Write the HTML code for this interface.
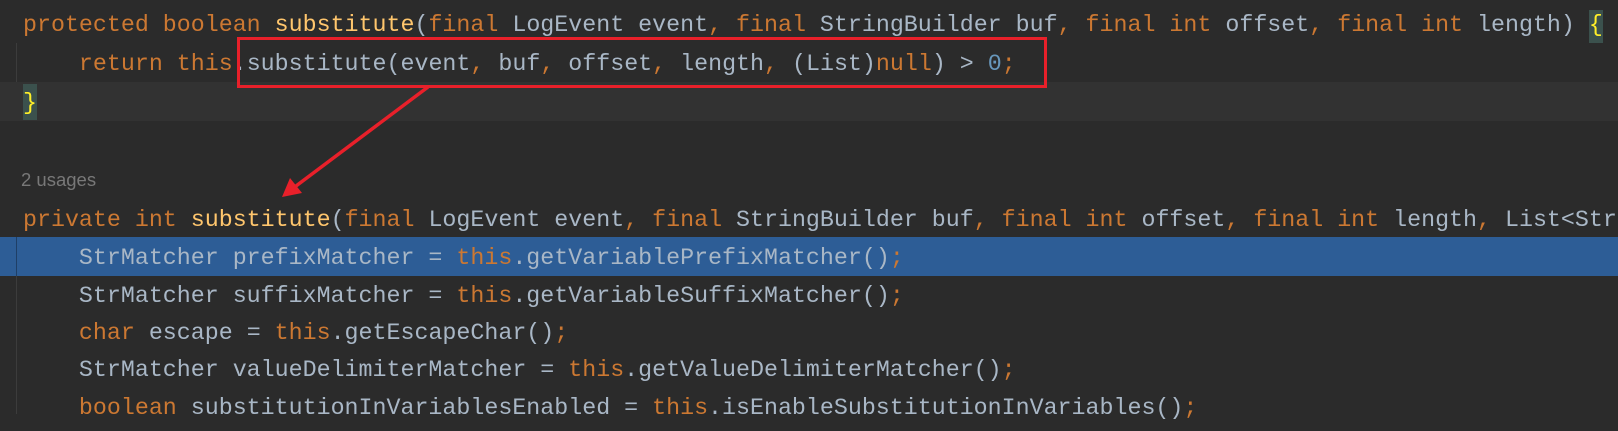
<!DOCTYPE html>
<html><head><meta charset="utf-8"><style>
html,body{margin:0;padding:0;}
body{width:1618px;height:414px;background:#2b2b2b;position:relative;overflow:hidden;}
.l{position:absolute;left:23px;width:1595px;overflow:hidden;margin:0;font-family:"Liberation Mono",monospace;font-size:23.3px;line-height:30px;height:38px;white-space:pre;color:#a9b7c6;}
.k{color:#cc7832}.m{color:#ffc66d}.n{color:#6897bb}
.br{color:#ffef28;background:#3b514d;display:inline-block;height:38px;line-height:30px;padding-top:4px;box-sizing:border-box;}
.band{position:absolute;left:0;width:1618px;}
.guide{position:absolute;left:16px;width:1px;background:#3c3c3c;}
</style></head><body>
<div class="band" style="top:82px;height:39px;background:#323232"></div>
<div class="band" style="top:237px;height:39px;background:#2d5d96"></div>
<div class="guide" style="top:43px;height:39px"></div>
<div class="guide" style="top:237px;height:177px;background:#1f3f66"></div>
<div class="guide" style="top:276px;height:138px"></div>

<pre class="l" style="top:10px;height:34px"><span class="k">protected boolean </span><span class="m">substitute</span>(<span class="k">final </span>LogEvent event<span class="k">, final </span>StringBuilder buf<span class="k">, final int </span>offset<span class="k">, final int </span>length) <span class="br" style="margin-top:-6px;vertical-align:top;padding-top:6px;height:39px">{</span></pre>
<pre class="l" style="top:49px">    <span class="k">return this</span>.substitute(event<span class="k">, </span>buf<span class="k">, </span>offset<span class="k">, </span>length<span class="k">, </span>(List)<span class="k">null</span>) &gt; <span class="n">0</span><span class="k">;</span></pre>
<pre class="l" style="top:84px"><span class="br" style="vertical-align:top;margin-top:-2px;padding-top:6px">}</span></pre>
<div style="position:absolute;left:21px;top:169px;font-family:'Liberation Sans',sans-serif;font-size:18.5px;color:#787878;">2 usages</div>
<pre class="l" style="top:205px"><span class="k">private int </span><span class="m">substitute</span>(<span class="k">final </span>LogEvent event<span class="k">, final </span>StringBuilder buf<span class="k">, final int </span>offset<span class="k">, final int </span>length<span class="k">, </span>List&lt;String&gt; priorVariables) {</pre>
<pre class="l" style="top:243px">    StrMatcher prefixMatcher = <span class="k">this</span>.getVariablePrefixMatcher()<span class="k">;</span></pre>
<pre class="l" style="top:281px">    StrMatcher suffixMatcher = <span class="k">this</span>.getVariableSuffixMatcher()<span class="k">;</span></pre>
<pre class="l" style="top:318px">    <span class="k">char </span>escape = <span class="k">this</span>.getEscapeChar()<span class="k">;</span></pre>
<pre class="l" style="top:355px">    StrMatcher valueDelimiterMatcher = <span class="k">this</span>.getValueDelimiterMatcher()<span class="k">;</span></pre>
<pre class="l" style="top:393px">    <span class="k">boolean </span>substitutionInVariablesEnabled = <span class="k">this</span>.isEnableSubstitutionInVariables()<span class="k">;</span></pre>

<svg width="1618" height="414" style="position:absolute;left:0;top:0" xmlns="http://www.w3.org/2000/svg">
<rect x="238.5" y="38.5" width="807" height="48" fill="none" stroke="#e8202a" stroke-width="3"/>
<line x1="428" y1="87" x2="292" y2="189" stroke="#e8202a" stroke-width="3.5"/>
<polygon points="282,197 290,178 302,193" fill="#e8202a"/>
</svg>
</body></html>
